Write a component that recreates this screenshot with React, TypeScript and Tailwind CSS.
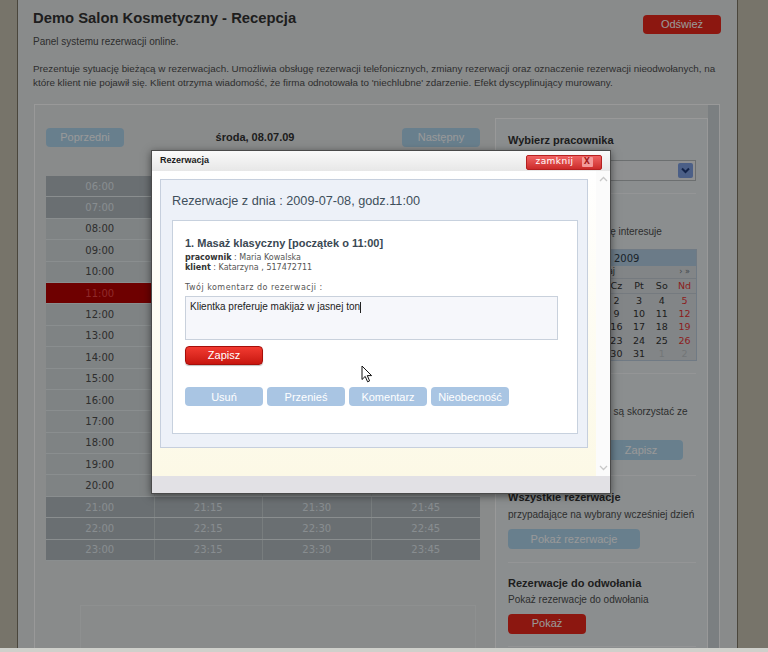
import React from 'react'

const hours = [6, 7, 8, 9, 10, 11, 12, 13, 14, 15, 16, 17, 18, 19, 20, 21, 22, 23]
const pad = (n: number) => (n < 10 ? '0' + n : '' + n)

const weeks: { n: number; out?: boolean }[][] = [
  [{ n: 29, out: true }, { n: 30, out: true }, { n: 1 }, { n: 2 }, { n: 3 }, { n: 4 }, { n: 5 }],
  [{ n: 6 }, { n: 7 }, { n: 8 }, { n: 9 }, { n: 10 }, { n: 11 }, { n: 12 }],
  [{ n: 13 }, { n: 14 }, { n: 15 }, { n: 16 }, { n: 17 }, { n: 18 }, { n: 19 }],
  [{ n: 20 }, { n: 21 }, { n: 22 }, { n: 23 }, { n: 24 }, { n: 25 }, { n: 26 }],
  [{ n: 27 }, { n: 28 }, { n: 29 }, { n: 30 }, { n: 31 }, { n: 1, out: true }, { n: 2, out: true }],
]

function BlueBtn({ children, className = '' }: { children: React.ReactNode; className?: string }) {
  return (
    <button className={`h-[20px] rounded-[4px] bg-[#aed4ec] text-[11px] text-white ${className}`}>
      {children}
    </button>
  )
}

function Schedule() {
  return (
    <div className="w-[434px] font-['DejaVu_Sans',sans-serif] text-[10px]">
      {hours.map(h => {
        const dark = h < 8 || h > 20
        const red = h === 11
        const bg = red ? 'bg-[#b80000]' : dark ? 'bg-[#b1b9be]' : 'bg-[#d4dadc]'
        const fg = red ? 'text-[#ee4646]' : dark ? 'text-[#e3ebf0]' : 'text-[#4d4d4d]'
        return (
          <div key={h} className={`grid grid-cols-4 h-[21.4px] border-b border-[#e6edef] ${bg} ${fg}`}>
            {[0, 15, 30, 45].map(m => (
              <div key={m} className="flex items-center justify-center border-r border-[#c8d0d3] last:border-r-0">
                {pad(h)}:{pad(m)}
              </div>
            ))}
          </div>
        )
      })}
    </div>
  )
}

function Calendar() {
  return (
    <div className="w-[189px] border border-[#bbcbdc] bg-[#d9dee1] font-['DejaVu_Sans',sans-serif] text-[9.5px] text-[#333]">
      <div className="h-[16px] bg-[#b3cde3] flex items-center justify-center pl-[16px] text-[10px] text-[#2c3a46]">
        Lipiec 2009
      </div>
      <div className="h-[13px] flex items-center justify-between px-[6px] text-[8px] border-b border-[#c3ccd4]">
        <span className="text-[#6a7580]">« ‹</span>
        <span>dzisiaj</span>
        <span className="text-[#6a7580]">› »</span>
      </div>
      <div className="grid grid-cols-[28px_repeat(7,22.7px)] h-[15px] items-center text-center border-b border-[#c3ccd4]">
        <span className="text-[#8a949c]">Tc</span>
        {['Pn', 'Wt', 'Śr', 'Cz', 'Pt', 'So'].map(d => <span key={d}>{d}</span>)}
        <span className="text-[#e83535]">Nd</span>
      </div>
      {weeks.map((w, i) => (
        <div key={i} className="grid grid-cols-[28px_repeat(7,22.7px)] h-[13.2px] items-center text-center">
          <span className="text-[#8a949c]">{27 + i}</span>
          {w.map((d, j) => (
            <span key={j} className={d.out ? 'text-[#bfc5c8]' : j === 6 ? 'text-[#e83535]' : ''}>
              {d.n}
            </span>
          ))}
        </div>
      ))}
    </div>
  )
}

function Sidebar() {
  return (
    <div className="mt-[13px] w-[213px] border border-white bg-[#e8edef] pl-[12px] pr-[11px] text-[#4d4d4d]">
      <div className="pt-[14px] pb-[12px] border-b border-[#f7f9fa]">
        <h3 className="text-[11px] leading-[14px] font-bold text-[#333]">Wybierz pracownika</h3>
        <div className="mt-[13px] h-[21px] border border-[#b4b9bb] bg-[#eef0f2] flex items-center justify-between pl-[4px] pr-[2px] text-[10px]">
          <span>Maria Kowalska</span>
          <span className="w-[15px] h-[15px] rounded-[2px] bg-[#7d9fe1] flex items-center justify-center">
            <svg width="9" height="7" viewBox="0 0 9 7"><path d="M1 1.5 L4.5 5 L8 1.5" stroke="#1f3b7a" strokeWidth="2" fill="none" /></svg>
          </span>
        </div>
      </div>
      <div className="pb-[12px] border-b border-[#f7f9fa]">
        <h3 className="mt-[11px] text-[11px] leading-[14px] font-bold text-[#333]">Wybierz dzień</h3>
        <p className="mt-[7px] text-[10px] leading-[12px]">Wybierz dzień, który Cię interesuje</p>
        <div className="mt-[11px]"><Calendar /></div>
      </div>
      <div className="pt-[13px] pb-[15px] border-b border-[#f7f9fa]">
        <h3 className="text-[11px] leading-[14px] font-bold text-[#333]">Usługi</h3>
        <p className="mt-[4px] text-[10px] leading-[13px] whitespace-nowrap">
          Usługi, z których chętni są skorzystać ze
          <br />
          klienci.
        </p>
        <div className="mt-[9px] flex justify-end pr-[13px]">
          <BlueBtn className="w-[84px]">Zapisz</BlueBtn>
        </div>
      </div>
      <div className="pt-[14px] pb-[12px] border-b border-[#f7f9fa]">
        <h3 className="text-[11px] leading-[14px] font-bold text-[#333]">Wszystkie rezerwacje</h3>
        <p className="mt-[5px] text-[10px] leading-[12px]">przypadające na wybrany wcześniej dzień</p>
        <BlueBtn className="mt-[8px] w-[132px]">Pokaż rezerwacje</BlueBtn>
      </div>
      <div className="pt-[13px] pb-[12px] border-b border-[#f7f9fa]">
        <h3 className="text-[11px] leading-[14px] font-bold text-[#333]">Rezerwacje do odwołania</h3>
        <p className="mt-[4px] text-[10px] leading-[12px]">Pokaż rezerwacje do odwołania</p>
        <button className="mt-[8px] w-[78px] h-[20px] rounded-[4px] bg-[#ea271b] text-[11px] text-white">Pokaż</button>
      </div>
    </div>
  )
}

function Modal() {
  return (
    <div className="absolute left-[151px] top-[150px] w-[460px] h-[344px] border border-[#4a4a4a] bg-white shadow-[0_2px_8px_rgba(0,0,0,0.5)] flex flex-col">
      <div className="h-[20px] flex items-center justify-between px-[8px] bg-gradient-to-b from-[#fafafa] to-[#e7e7e7]">
        <span className="text-[9px] font-bold text-[#1a1a1a]">Rezerwacja</span>
        <button className="mt-[2px] w-[76px] h-[15px] rounded-[2px] border border-[#b52020] bg-gradient-to-b from-[#f06262] to-[#cc2a2a] flex items-center justify-center gap-[8px] font-['DejaVu_Sans',sans-serif] text-[9px] text-white tracking-[0.05em]">
          <span>zamknij</span>
          <span className="w-[11px] h-[10px] rounded-[1px] bg-[#f39a9a] text-[#a51c1c] text-[8px] leading-[10px] font-bold flex items-center justify-center">X</span>
        </button>
      </div>
      <div className="h-[305px] flex">
        <div className="w-[444px] pl-[8px] pt-[8px] bg-gradient-to-b from-white to-[#fcf9e6]">
          <div className="w-[428px] h-[269px] border border-[#c6cfdd] bg-[#edf1f8] pl-[11px] pt-[13px]">
            <h2 className="text-[12.7px] leading-[16px] text-[#3e4f5b]">Rezerwacje z dnia : 2009-07-08, godz.11:00</h2>
            <div className="mt-[11px] w-[406px] h-[214px] border border-[#c7d1de] bg-white pl-[12px] pt-[15px]">
              <h3 className="text-[11px] leading-[14px] font-bold text-[#3a4853]">1. Masaż klasyczny [początek o 11:00]</h3>
              <div className="mt-[3px] font-['DejaVu_Sans',sans-serif] text-[8px] leading-[10px] text-[#555]">
                <p><b className="text-[#333]">pracownik</b> : Maria Kowalska</p>
                <p><b className="text-[#333]">klient</b> : Katarzyna , 517472711</p>
                <p className="mt-[10px] tracking-[0.06em]">Twój komentarz do rezerwacji :</p>
              </div>
              <div className="mt-[3px] w-[373px] h-[44px] border border-[#c9d1dc] bg-[#f6f7fb] px-[4px] pt-[3px] text-[10px] leading-[13px] text-[#222]">
                Klientka preferuje makijaż w jasnej ton<span className="inline-block w-px h-[11px] bg-[#222] align-middle" />
              </div>
              <button className="mt-[6px] w-[78px] h-[19px] rounded-[4px] border border-[#a60f0a] bg-gradient-to-b from-[#f23a30] to-[#c8150e] text-[11px] text-white shadow-[0_1px_1px_rgba(0,0,0,0.25)]">
                Zapisz
              </button>
              <div className="mt-[21px] flex gap-[4px]">
                {['Usuń', 'Przenieś', 'Komentarz', 'Nieobecność'].map(t => (
                  <button key={t} className="w-[78px] h-[19px] rounded-[4px] bg-[#a9c5e3] text-[11px] text-white">{t}</button>
                ))}
              </div>
            </div>
          </div>
        </div>
        <div className="w-[14px] bg-[#fbfbfb] flex flex-col justify-between items-center py-[5px]">
          <svg width="9" height="6" viewBox="0 0 9 6"><path d="M1 5 L4.5 1.5 L8 5" stroke="#c8c8c8" strokeWidth="1.3" fill="none" /></svg>
          <svg width="9" height="6" viewBox="0 0 9 6"><path d="M1 1 L4.5 4.5 L8 1" stroke="#c8c8c8" strokeWidth="1.3" fill="none" /></svg>
        </div>
      </div>
      <div className="flex-1 bg-[#e2e1e5]" />
    </div>
  )
}

export default function App() {
  return (
    <div className="relative w-[768px] h-[652px] overflow-hidden bg-[#c7c2b1] font-['Liberation_Sans',Arial,sans-serif]">
      <div className="relative h-[648px] overflow-hidden">
        <div className="ml-[17px] w-[721px] h-full border-x border-[#7c7564] bg-[#e5e8e8] pl-[15px] pr-[16px] flex flex-col">
          <div className="h-[27px] flex items-start justify-between pt-[9px]">
            <h1 className="text-[14.8px] leading-[18px] font-bold text-[#333]">Demo Salon Kosmetyczny - Recepcja</h1>
            <button className="mt-[6px] w-[78px] h-[19px] shrink-0 rounded-[4px] bg-[#ea271b] text-[11px] text-white">Odśwież</button>
          </div>
          <p className="mt-[9px] text-[10px] leading-[12px] text-[#4d4d4d]">Panel systemu rezerwacji online.</p>
          <p className="mt-[14px] text-[9.85px] leading-[14px] text-[#4d4d4d] whitespace-nowrap">
            Prezentuje sytuację bieżącą w rezerwacjach. Umożliwia obsługę rezerwacji telefonicznych, zmiany rezerwacji oraz oznaczenie rezerwacji nieodwołanych, na
            <br />
            które klient nie pojawił się. Klient otrzyma wiadomość, że firma odnotowała to 'niechlubne' zdarzenie. Efekt dyscyplinujący murowany.
          </p>
          <div className="mt-[14px] ml-[1px] w-[686px] flex-1 flex border-x border-t border-white">
            <div className="w-[460px] pl-[11px]">
              <div className="mt-[23px] w-[434px] h-[19px] flex items-center justify-between">
                <BlueBtn className="w-[78px] !h-[19px]">Poprzedni</BlueBtn>
                <span className="mr-[16px] text-[11px] font-bold text-[#333]">środa, 08.07.09</span>
                <BlueBtn className="w-[78px] !h-[19px]">Następny</BlueBtn>
              </div>
              <div className="mt-[29px]"><Schedule /></div>
              <div className="mt-[44px] ml-[34px] w-[396px] h-[50px] border border-[#edf0f1]" />
            </div>
            <Sidebar />
            <div className="w-[11px] bg-[#cdd4d7]" />
          </div>
        </div>
        <div className="absolute inset-0 bg-black/40" />
      </div>
      <div className="h-[4px] bg-[#cfd0cb]" />
      <Modal />
      <svg className="absolute left-[361px] top-[365px]" width="12" height="18" viewBox="0 0 12 18">
        <path d="M1 1 L1 14.5 L4.2 11.4 L6.6 16.8 L8.6 15.9 L6.3 10.6 L10.6 10.6 Z" fill="white" stroke="#111" strokeWidth="1" strokeLinejoin="round" />
      </svg>
    </div>
  )
}
